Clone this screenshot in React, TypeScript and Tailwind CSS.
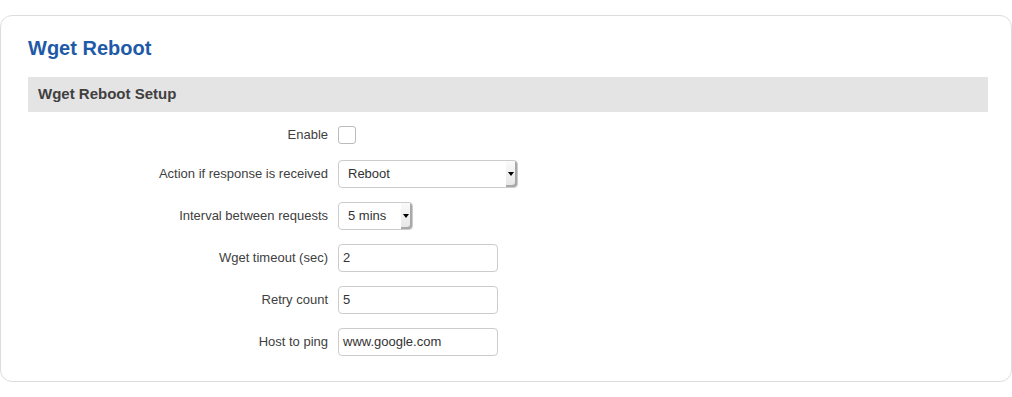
import type { ReactNode } from 'react';

function Row({ label, children, className }: { label: string; children: ReactNode; className: string }) {
    return (
        <div className={`flex items-center ${className}`}>
            <div className="w-[310px] pr-[10px] text-right text-[13px] text-[#404040]">{label}</div>
            {children}
        </div>
    );
}

function Select({ value, width }: { value: string; width: string }) {
    return (
        <div className={`flex h-[28px] ${width} items-stretch rounded-[4px] border border-[#cccccc] bg-white`}>
            <div className="flex flex-1 items-center pl-[9px] text-[13px] text-[#333333]">{value}</div>
            <div className="flex w-[11px] items-center justify-center rounded-r-[3px] bg-gradient-to-b from-[#fafafa] to-[#e6e6e6] shadow-[inset_-2px_-2px_0_#a9a9a9]">
                <div className="mr-[2px] h-0 w-0 border-x-[3px] border-t-[4px] border-x-transparent border-t-black" />
            </div>
        </div>
    );
}

function TextInput({ value }: { value: string }) {
    return (
        <div className="flex h-[28px] w-[160px] items-center rounded-[4px] border border-[#cccccc] bg-white pl-[4px] text-[13px] text-[#333333]">
            {value}
        </div>
    );
}

export default function App() {
    return (
        <div className="min-h-[397px] bg-white pt-[15px] font-['Liberation_Sans',Arial,sans-serif]">
            <div className="rounded-[12px] border border-[#dddddd] pl-[27px] pr-[23px] pt-[20px] pb-[25px]">
                <h2 className="mb-[17px] text-[20px] font-bold leading-[24px] text-[#1e5aa8]">Wget Reboot</h2>
                <div className="flex h-[35px] items-center bg-[#e4e4e4] pl-[10px] text-[15px] font-bold text-[#404040]">
                    Wget Reboot Setup
                </div>

                <Row label="Enable" className="mt-[14px] h-[18px]">
                    <div className="h-[18px] w-[18px] rounded-[3px] border border-[#bbbbbb] bg-white" />
                </Row>
                <Row label="Action if response is received" className="mt-[16px] h-[28px]">
                    <Select value="Reboot" width="w-[180px]" />
                </Row>
                <Row label="Interval between requests" className="mt-[14px] h-[28px]">
                    <Select value="5 mins" width="w-[75px]" />
                </Row>
                <Row label="Wget timeout (sec)" className="mt-[14px] h-[28px]">
                    <TextInput value="2" />
                </Row>
                <Row label="Retry count" className="mt-[14px] h-[28px]">
                    <TextInput value="5" />
                </Row>
                <Row label="Host to ping" className="mt-[14px] h-[28px]">
                    <TextInput value="www.google.com" />
                </Row>
            </div>
        </div>
    );
}
